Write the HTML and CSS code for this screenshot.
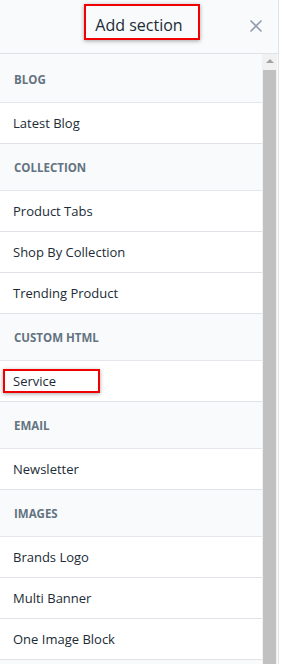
FILE: index.html
```html
<!DOCTYPE html>
<html lang="en">
<head>
    <meta charset="UTF-8">
    <meta name="viewport" content="width=device-width, initial-scale=1.0">
    <title>Add section</title>
    <link rel="stylesheet" href="styles.css">
</head>
<body>

<div class="panel">
    <header class="panel-header">
        <h1 class="panel-title"><span class="mark">Add section</span></h1>
        <button class="close-button" aria-label="Close">
            <svg width="14" height="14" viewBox="0 0 14 14">
                <path d="M1.5 1.5 L12.5 12.5 M12.5 1.5 L1.5 12.5" stroke="#919eab" stroke-width="1.6" fill="none"/>
            </svg>
        </button>
    </header>

    <div class="panel-body">
        <div class="section-list">
            <div class="group-title">Blog</div>
            <div class="item">Latest Blog</div>

            <div class="group-title">Collection</div>
            <div class="item">Product Tabs</div>
            <div class="item">Shop By Collection</div>
            <div class="item">Trending Product</div>

            <div class="group-title">Custom HTML</div>
            <div class="item"><span class="mark mark-item">Service</span></div>

            <div class="group-title">Email</div>
            <div class="item">Newsletter</div>

            <div class="group-title">Images</div>
            <div class="item">Brands Logo</div>
            <div class="item">Multi Banner</div>
            <div class="item">One Image Block</div>

            <div class="group-title"></div>
        </div>

        <div class="scrollbar">
            <div class="scroll-arrow"></div>
            <div class="scroll-thumb"></div>
        </div>
    </div>
</div>

</body>
</html>
```

FILE: styles.css
```css
/* General Reset */
* {
    margin: 0;
    padding: 0;
    box-sizing: border-box;
}

body {
    font-family: "Open Sans", "Noto Sans", sans-serif;
    background-color: #ffffff;
    color: #212b36;
    width: 286px;
    height: 664px;
    overflow: hidden;
}

/* Panel */
.panel {
    width: 279px;
    height: 664px;
    border-right: 1px solid #dfe3e8;
    background-color: #f9fafb;
    display: flex;
    flex-direction: column;
}

.panel-header {
    height: 54px;
    flex-shrink: 0;
    border-bottom: 1px solid #dfe3e8;
    display: flex;
    align-items: center;
    justify-content: center;
    position: relative;
}

.panel-title {
    font-size: 16px;
    font-weight: 400;
    margin-top: -4px;
}

/* Red highlight boxes */
.mark {
    position: relative;
}

.mark::after {
    content: "";
    position: absolute;
    border: 2px solid #f00000;
    box-shadow: 0 1px 4px rgba(0, 0, 0, 0.35);
}

.panel-title .mark::after {
    left: -11px;
    right: -17px;
    top: -10px;
    bottom: -4px;
}

.mark-item::after {
    left: -10px;
    right: -44px;
    top: -3px;
    bottom: -3px;
}

.close-button {
    position: absolute;
    right: 15px;
    top: 19px;
    background: none;
    border: none;
    width: 14px;
    height: 14px;
    cursor: pointer;
}

/* Body with list and scrollbar */
.panel-body {
    flex: 1;
    display: flex;
    overflow: hidden;
}

.section-list {
    width: 262px;
    flex-shrink: 0;
    padding-top: 2px;
}

.group-title {
    height: 47px;
    padding: 0 14px;
    display: flex;
    align-items: center;
    font-size: 11.5px;
    font-weight: 700;
    text-transform: uppercase;
    color: #637381;
    background-color: #f9fafb;
    border-bottom: 1px solid #e4e7eb;
}

.item {
    height: 41px;
    padding: 0 13px;
    display: flex;
    align-items: center;
    font-size: 13px;
    background-color: #ffffff;
    border-bottom: 1px solid #dfe3e8;
}

/* Fake scrollbar */
.scrollbar {
    width: 15px;
    background-color: #f1f1f1;
    display: flex;
    flex-direction: column;
    align-items: center;
}

.scroll-arrow {
    margin-top: 5px;
    width: 0;
    height: 0;
    border-left: 4px solid transparent;
    border-right: 4px solid transparent;
    border-bottom: 4px solid #a3a3a3;
}

.scroll-thumb {
    margin-top: 7px;
    width: 13px;
    flex: 1;
    background-color: #c1c1c1;
}
```
